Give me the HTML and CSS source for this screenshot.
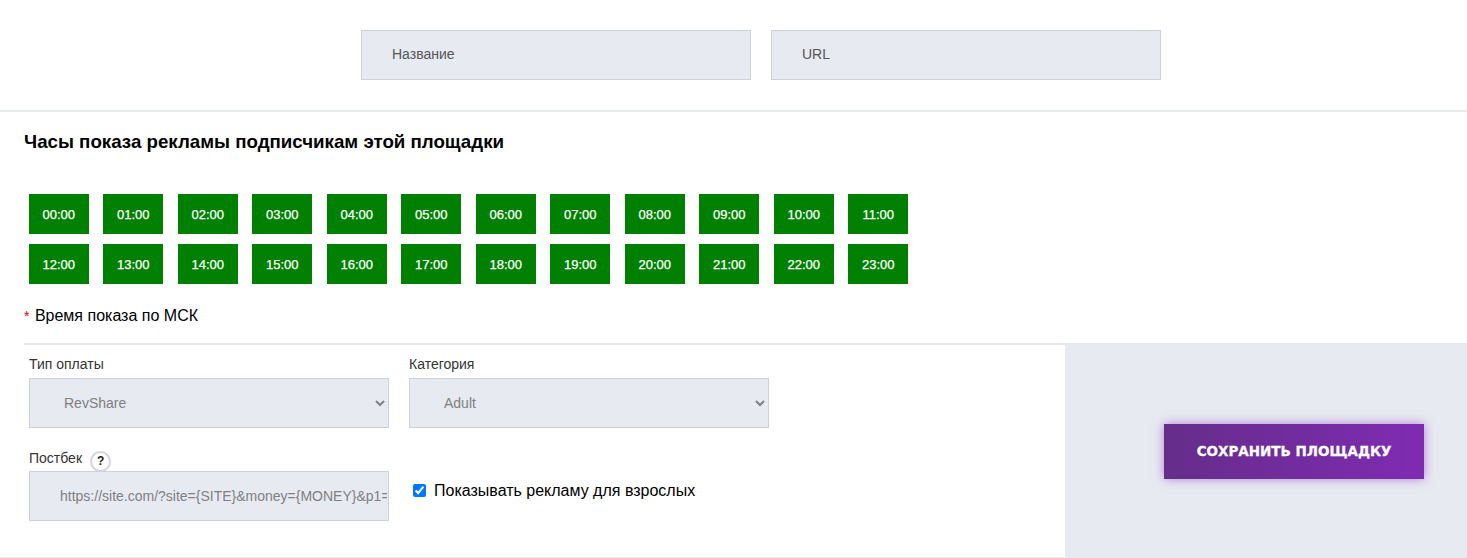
FILE: index.html
```html
<!DOCTYPE html>
<html lang="ru">
<head>
    <meta charset="UTF-8">
    <title>Площадка</title>
    <link rel="stylesheet" href="styles.css">
</head>
<body>
    <div class="top-fields">
        <input class="field" type="text" placeholder="Название">
        <input class="field" type="text" placeholder="URL">
    </div>

    <div class="hours-block">
        <h2>Часы показа рекламы подписчикам этой площадки</h2>
        <div class="hours">
            <button class="hour">00:00</button>
            <button class="hour">01:00</button>
            <button class="hour">02:00</button>
            <button class="hour">03:00</button>
            <button class="hour">04:00</button>
            <button class="hour">05:00</button>
            <button class="hour">06:00</button>
            <button class="hour">07:00</button>
            <button class="hour">08:00</button>
            <button class="hour">09:00</button>
            <button class="hour">10:00</button>
            <button class="hour">11:00</button>
            <button class="hour">12:00</button>
            <button class="hour">13:00</button>
            <button class="hour">14:00</button>
            <button class="hour">15:00</button>
            <button class="hour">16:00</button>
            <button class="hour">17:00</button>
            <button class="hour">18:00</button>
            <button class="hour">19:00</button>
            <button class="hour">20:00</button>
            <button class="hour">21:00</button>
            <button class="hour">22:00</button>
            <button class="hour">23:00</button>
        </div>
        <p class="note"><span class="star">*</span> Время показа по МСК</p>
    </div>

    <div class="bottom">
        <div class="settings">
            <div class="settings-row">
                <div class="group">
                    <label>Тип оплаты</label>
                    <select class="field">
                        <option>RevShare</option>
                    </select>
                </div>
                <div class="group">
                    <label>Категория</label>
                    <select class="field">
                        <option>Adult</option>
                    </select>
                </div>
            </div>
            <div class="settings-row">
                <div class="group">
                    <label class="with-help">Постбек <span class="help">?</span></label>
                    <input class="field postback" type="text" value="https://site.com/?site={SITE}&amp;money={MONEY}&amp;p1={P1}&amp;p2={P2}">
                </div>
                <label class="adult-check"><input type="checkbox" checked> Показывать рекламу для взрослых</label>
            </div>
        </div>
        <div class="save-panel">
            <button class="save-button">СОХРАНИТЬ ПЛОЩАДКУ</button>
        </div>
    </div>
</body>
</html>
```

FILE: styles.css
```css
* {
    box-sizing: border-box;
}

body {
    margin: 0;
    font-family: "Liberation Sans", Arial, sans-serif;
    color: #000;
    background: #fff;
}

.field {
    display: block;
    width: 390px;
    height: 50px;
    padding: 0 30px;
    background: #e8eaf2;
    border: 1px solid #cdd0d8;
    border-radius: 0;
    font-family: inherit;
    font-size: 14px;
    color: #808080;
}

.field::placeholder {
    color: #555;
    opacity: 1;
}

.top-fields {
    display: flex;
    justify-content: center;
    gap: 20px;
    height: 112px;
    padding-top: 30px;
    padding-left: 55px;
    border-bottom: 2px solid #e8eaf2;
}

.top-fields .field {
    padding-bottom: 2px;
}

.hours-block {
    padding: 0 24px;
}

h2 {
    margin: 0;
    padding-top: 19px;
    font-size: 18.72px;
    line-height: 21px;
    font-weight: bold;
}

.hours {
    display: grid;
    grid-template-columns: repeat(12, 60px);
    column-gap: 14.5px;
    row-gap: 10px;
    margin-top: 42px;
    padding-left: 4.8px;
}

.hour {
    height: 40px;
    padding: 0;
    background: #008000;
    border: none;
    color: #fff;
    font-family: inherit;
    font-size: 13px;
    -webkit-text-stroke: 0.25px #fff;
    cursor: pointer;
}

.note {
    margin: 23px 0 0;
    height: 36px;
    font-size: 16px;
    line-height: 18px;
}

.star {
    margin-right: 1px;
    color: #e00000;
    font-size: 14px;
}

.bottom {
    display: flex;
    height: 215px;
    border-bottom: 1px solid #e8eaf2;
}

.settings {
    width: 1041px;
    margin-left: 24px;
    padding: 11px 5px 0;
    border-top: 2px solid #e8eaf2;
}

.settings-row {
    display: flex;
    gap: 20px;
}

.settings-row + .settings-row {
    margin-top: 18px;
}

.settings .field {
    width: 360px;
}

.group label {
    display: block;
    height: 22px;
    font-size: 14px;
    line-height: 16px;
    color: #333;
}

.group .with-help {
    display: flex;
    align-items: flex-start;
    height: 25px;
    padding-top: 4px;
}

.help {
    width: 21px;
    height: 21px;
    margin-top: 1px;
    margin-left: 8px;
    background: #fff;
    border: 2px solid #d4d6dc;
    border-radius: 50%;
    text-align: center;
    font-size: 12px;
    line-height: 17px;
    font-weight: bold;
    color: #222;
}

.postback {
    padding-right: 1px;
}

.adult-check {
    display: flex;
    align-items: center;
    gap: 8px;
    height: 50px;
    margin-top: 20px;
    padding-left: 4px;
    font-size: 16px;
}

.adult-check input {
    width: 13px;
    height: 13px;
    margin: 0 0 2px;
}

.save-panel {
    flex: 1;
    display: flex;
    align-items: center;
    justify-content: flex-end;
    padding-right: 43px;
    padding-top: 3px;
    background: #e8eaf2;
}

.save-button {
    width: 260px;
    height: 55px;
    padding: 0 0 2px;
    background: linear-gradient(90deg, #652d8a, #7f2bb2);
    border: none;
    box-shadow: 0 0 10px rgba(127, 43, 178, 0.55);
    color: #fff;
    font-family: "DejaVu Sans", sans-serif;
    font-size: 13.5px;
    font-weight: bold;
    -webkit-text-stroke: 0.3px #fff;
    cursor: pointer;
}
```
